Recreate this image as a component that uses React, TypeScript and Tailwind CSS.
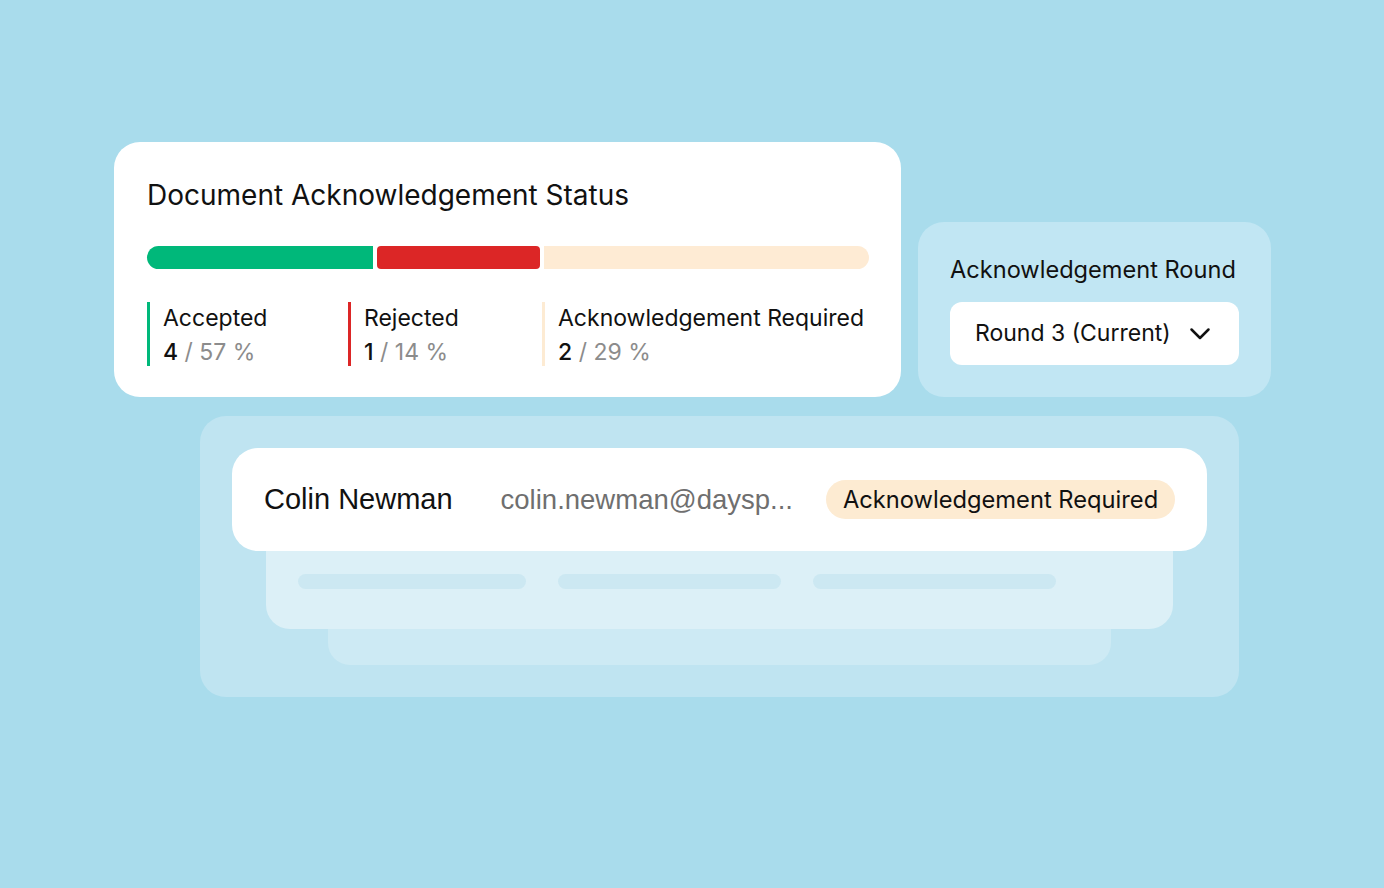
const stats = [
  { label: 'Accepted', count: 4, pct: 57, border: 'border-[#00b87a]', width: 'w-[201px]' },
  { label: 'Rejected', count: 1, pct: 14, border: 'border-[#dc2626]', width: 'w-[194px]' },
  { label: 'Acknowledgement Required', count: 2, pct: 29, border: 'border-[#fdebd3]', width: '' },
];

function Chevron() {
  return (
    <svg width="22" height="14" viewBox="0 0 22 14" fill="none" className="text-[#111]">
      <path d="M2.5 2.5 L11 11 L19.5 2.5" stroke="currentColor" strokeWidth="2.5" strokeLinecap="round" strokeLinejoin="round" />
    </svg>
  );
}

function StatusCard() {
  return (
    <div className="w-[787px] rounded-[26px] bg-white pl-[33px] pr-[32px] pt-[36px] pb-[31px]">
      <h2 className="text-[28px] leading-[34px] text-[#111]">Document Acknowledgement Status</h2>

      <div className="mt-[34px] flex h-[23px] gap-[4px]">
        <div className="w-[226px] rounded-l-full rounded-r-[4px] bg-[#00b87a]" />
        <div className="w-[163px] rounded-[4px] bg-[#dc2626]" />
        <div className="flex-1 rounded-l-[4px] rounded-r-full bg-[#feebd4]" />
      </div>

      <div className="mt-[33px] flex">
        {stats.map((s) => (
          <div key={s.label} className={`${s.width} h-[64px] border-l-[3px] ${s.border} pl-[13px]`}>
            <div className="-mt-[1px] text-[23px] leading-[34px] text-[#111]">{s.label}</div>
            <div className="text-[23px] leading-[34px]">
              <span className="font-medium text-[#111]">{s.count}</span>
              <span className="text-[#8c8c8c]"> / {s.pct} %</span>
            </div>
          </div>
        ))}
      </div>
    </div>
  );
}

function RoundCard() {
  return (
    <div className="ml-[17px] mt-[80px] w-[353px] rounded-[26px] bg-[#c1e6f3] px-[32px] pt-[32px] pb-[32px]">
      <div className="text-[23.6px] leading-[32px] text-[#111]">Acknowledgement Round</div>
      <div className="mt-[16px] flex h-[63px] items-center gap-[18px] rounded-[12px] bg-white pl-[25px]">
        <span className="text-[23px] text-[#111]">Round 3 (Current)</span>
        <Chevron />
      </div>
    </div>
  );
}

function RecipientsPanel() {
  return (
    <div className="ml-[200px] mt-[19px] w-[1039px] rounded-[26px] bg-[#bfe4f1] px-[32px] pt-[32px] pb-[32px]">
      <div className="relative z-20 flex h-[103px] items-center rounded-[26px] bg-white pl-[32px]">
        <span className="font-['Liberation_Sans',Arial,sans-serif] text-[29px] text-[#111]">Colin Newman</span>
        <span className="ml-[48px] font-['Liberation_Sans',Arial,sans-serif] text-[27.5px] text-[#6f6f6f]">
          colin.newman@daysp...
        </span>
        <span className="ml-[33px] flex h-[39px] items-center rounded-full bg-[#fdebd2] px-[17px] text-[23.7px] text-[#111]">
          Acknowledgement Required
        </span>
      </div>

      <div className="relative z-10 mx-[34px] -mt-[24px] flex h-[102px] gap-[32px] rounded-b-[24px] bg-[#dcf0f7] pl-[32px] pt-[47px]">
        <div className="h-[15px] w-[228px] rounded-full bg-[#cce8f2]" />
        <div className="h-[15px] w-[223px] rounded-full bg-[#cce8f2]" />
        <div className="h-[15px] w-[243px] rounded-full bg-[#cce8f2]" />
      </div>

      <div className="relative mx-[96px] -mt-[24px] h-[60px] rounded-b-[22px] bg-[#cdeaf4]" />
    </div>
  );
}

export default function App() {
  return (
    <div className="h-[888px] w-[1384px] overflow-hidden bg-[#a9dcec] pt-[142px] font-['Inter',sans-serif]">
      <div className="flex items-start pl-[114px]">
        <StatusCard />
        <RoundCard />
      </div>
      <RecipientsPanel />
    </div>
  );
}
